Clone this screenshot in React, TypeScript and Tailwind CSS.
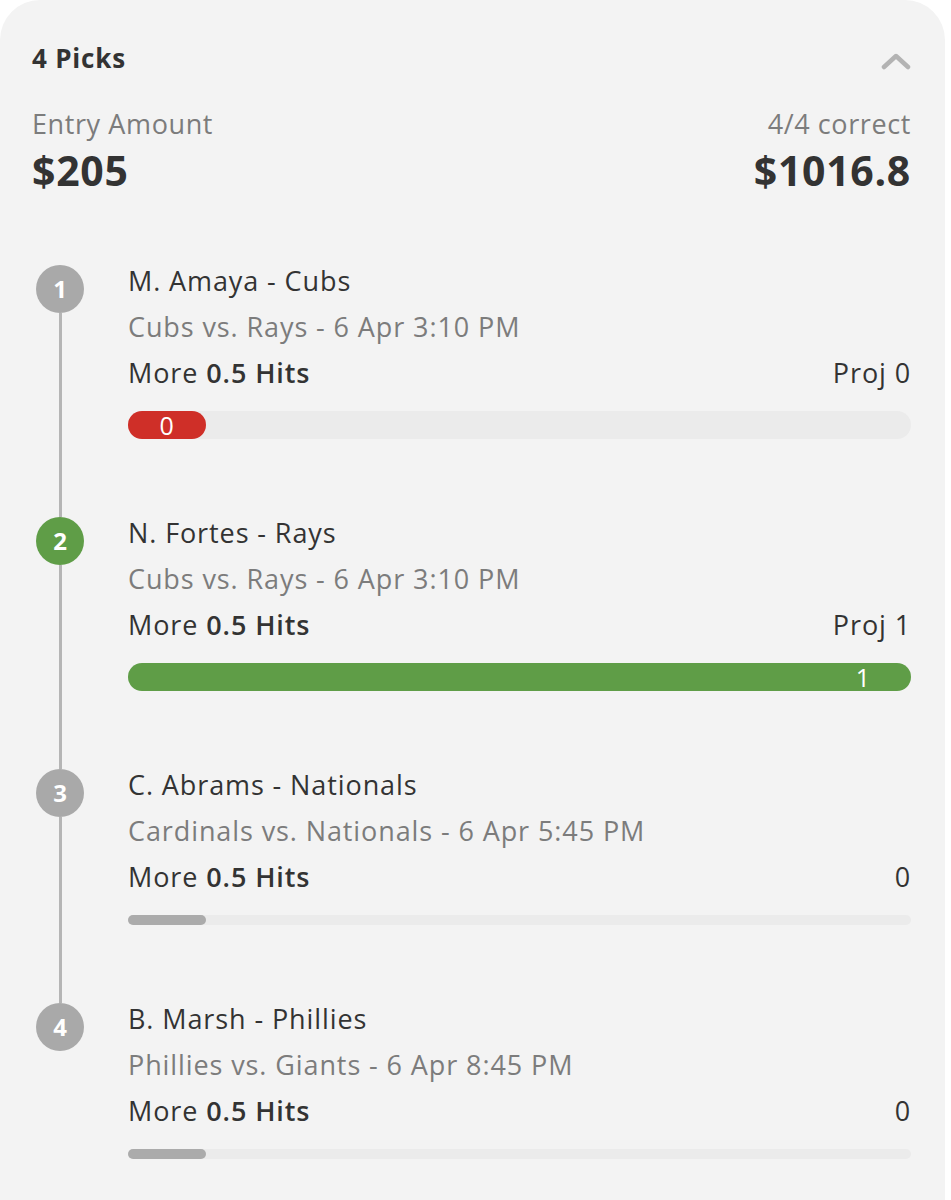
import React from 'react';

type Pick = {
  n: number;
  name: string;
  game: string;
  right: string;
  status: 'miss' | 'hit' | 'pending';
  value: number;
};

const picks: Pick[] = [
  { n: 1, name: 'M. Amaya - Cubs', game: 'Cubs vs. Rays - 6 Apr 3:10 PM', right: 'Proj 0', status: 'miss', value: 0 },
  { n: 2, name: 'N. Fortes - Rays', game: 'Cubs vs. Rays - 6 Apr 3:10 PM', right: 'Proj 1', status: 'hit', value: 1 },
  { n: 3, name: 'C. Abrams - Nationals', game: 'Cardinals vs. Nationals - 6 Apr 5:45 PM', right: '0', status: 'pending', value: 0 },
  { n: 4, name: 'B. Marsh - Phillies', game: 'Phillies vs. Giants - 6 Apr 8:45 PM', right: '0', status: 'pending', value: 0 },
];

function ProgressBar({ pick }: { pick: Pick }) {
  // pending picks get the thin grey stub, finished ones the tall pill with the count
  if (pick.status === 'pending') {
    return (
      <div className="mt-[15px] h-[10px] w-full rounded-full bg-[#ebebeb]">
        <div className="h-full w-[78px] rounded-full bg-[#ababab]" />
      </div>
    );
  }
  if (pick.status === 'hit') {
    return (
      <div className="mt-[15px] flex h-[28px] w-full items-center justify-end rounded-full bg-[#5f9d47] pr-[40px]">
        <span className="text-[25px] leading-none text-white">{pick.value}</span>
      </div>
    );
  }
  return (
    <div className="mt-[15px] h-[28px] w-full rounded-full bg-[#ebebeb]">
      <div className="flex h-full w-[78px] items-center justify-center rounded-full bg-[#cf2f28]">
        <span className="text-[25px] leading-none text-white">{pick.value}</span>
      </div>
    </div>
  );
}

function PickRow({ pick, first, last }: { pick: Pick; first: boolean; last: boolean }) {
  const circle = pick.status === 'hit' ? 'bg-[#5f9d47]' : 'bg-[#a9a9a9]';
  return (
    <div className="flex">
      {/* Timeline */}
      <div className="flex w-[48px] shrink-0 flex-col items-center">
        <div className={`h-[7px] w-[3px] ${first ? '' : 'bg-[#b5b5b5]'}`} />
        <div className={`flex h-[48px] w-[48px] items-center justify-center rounded-full ${circle}`}>
          <span className="text-[24px] font-bold leading-none text-white">{pick.n}</span>
        </div>
        {!last && <div className="w-[3px] flex-1 bg-[#b5b5b5]" />}
      </div>

      {/* Content */}
      <div className={`ml-[44px] flex-1 tracking-[0.9px] ${last ? '' : 'pb-[71px]'}`}>
        <div className="text-[27px] leading-[46px] text-[#333333]">{pick.name}</div>
        <div className="text-[27px] leading-[46px] text-[#7c7c7c]">{pick.game}</div>
        <div className="flex items-center justify-between text-[27px] leading-[46px] text-[#333333]">
          <span>
            More <span className="font-semibold">0.5 Hits</span>
          </span>
          <span className="font-medium">{pick.right}</span>
        </div>
        <ProgressBar pick={pick} />
      </div>
    </div>
  );
}

export default function App() {
  return (
    <div className="min-h-[1200px] bg-white" style={{ fontFamily: '"Open Sans", "Noto Sans", sans-serif' }}>
      <div className="min-h-[1200px] w-[945px] rounded-t-[40px] bg-[#f3f3f3] pl-[32px] pr-[34px] pt-[40px]">
        {/* Header */}
        <div className="flex h-[36px] items-center justify-between">
          <span className="text-[26px] font-bold leading-[36px] tracking-[0.8px] text-[#333333]">4 Picks</span>
          <svg width="30" height="18" viewBox="0 0 30 18" className="mt-[6px]">
            <path d="M3 15 L15 4 L27 15" fill="none" stroke="#b3b3b3" strokeWidth="4.5" strokeLinecap="round" strokeLinejoin="round" />
          </svg>
        </div>

        <div className="mt-[30px] flex justify-between">
          <div>
            <div className="text-[27px] leading-[36px] tracking-[0.6px] text-[#7c7c7c]">Entry Amount</div>
            <div className="mt-[4px] text-[41px] font-bold leading-[48px] tracking-[0.7px] text-[#333333]">$205</div>
          </div>
          <div className="text-right">
            <div className="text-[27px] leading-[36px] tracking-[0.6px] text-[#7c7c7c]">4/4 correct</div>
            <div className="mt-[4px] text-[41px] font-bold leading-[48px] tracking-[0.7px] text-[#333333]">$1016.8</div>
          </div>
        </div>

        {/* Picks */}
        <div className="mt-[64px] pl-[4px]">
          {picks.map((p, i) => (
            <PickRow key={p.n} pick={p} first={i === 0} last={i === picks.length - 1} />
          ))}
        </div>
      </div>
    </div>
  );
}
